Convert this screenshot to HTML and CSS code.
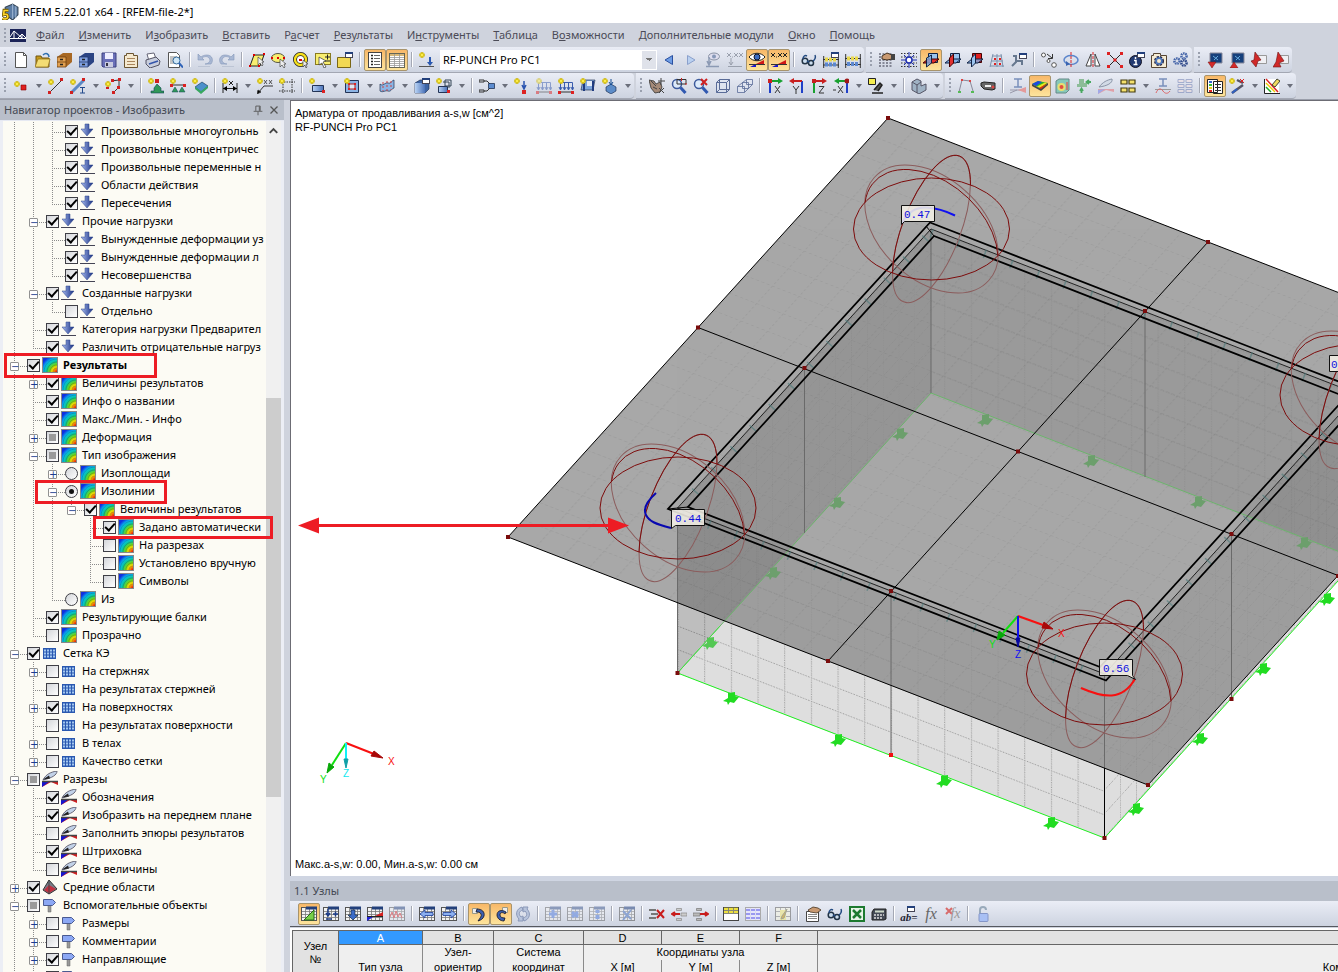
FILE: index.html
```html
<!DOCTYPE html>
<html lang="ru">
<head>
<meta charset="utf-8">
<title>RFEM 5.22.01 x64 - [RFEM-file-2*]</title>
<link rel="stylesheet" href="styles.css">
</head>
<body>
<svg class="defs" aria-hidden="true">
<defs>
<linearGradient id="gBlue" x1="0" x2="1"><stop offset="0" stop-color="#b9d3f5"/><stop offset="1" stop-color="#4a72b8"/></linearGradient>
<linearGradient id="gArrow" x1="0" x2="1"><stop offset="0" stop-color="#a9bdf2"/><stop offset="1" stop-color="#142c80"/></linearGradient>
<radialGradient id="gIso" cx="1" cy="1" r="1.3"><stop offset="0.05" stop-color="#e81010"/><stop offset="0.28" stop-color="#f8d800"/><stop offset="0.42" stop-color="#70d818"/><stop offset="0.58" stop-color="#08c8a0"/><stop offset="0.72" stop-color="#08b8f0"/><stop offset="0.9" stop-color="#1030e0"/></radialGradient>
<g id="st"><path d="M3 0v6M0 3h6M1 1l4 4M5 1l-4 4" stroke="#b8a000" stroke-width="1.6"/><path d="M3 .4v5.2M.4 3h5.2M1.3 1.3l3.4 3.4M4.7 1.3l-3.4 3.4" stroke="#fff04a" stroke-width=".9"/></g>
<g id="win"><rect x=".5" y=".5" width="7" height="5" fill="#fff" stroke="#445"/><path d="M0 1h8" stroke="#23407c" stroke-width="2"/></g>
<g id="tb"><rect x=".5" y="1.500" width="15" height="13" fill="#f4f4f4" stroke="#555"/><path d="M1 5.500h14M1 8.500h14M1 11.500h14M4.500 2v12M8.500 2v12M12.500 2v12" stroke="#777" stroke-width=".8"/><path d="M5 2h11" stroke="#23407c" stroke-width="3"/></g>
<symbol id="arrow" viewBox="0 0 16 16"><path d="M5 1h4v5h4l-6 7-6-7h4z" fill="url(#gArrow)" stroke="#2c4488" stroke-width=".5"/><path d="M0 14.500h15" stroke="#445" stroke-width="1"/></symbol>
<symbol id="iso" viewBox="0 0 16 16"><rect x=".5" y=".5" width="15" height="15" fill="url(#gIso)" stroke="#888"/><path d="M2 15C2 8 7 2 15 2M5 15C5 10 9 5 15 5M8 15c0-4 3-7 7-7M11 15c0-2 1-4 4-4" fill="none" stroke="#123" stroke-opacity=".35" stroke-width=".7"/></symbol>
<symbol id="mesh" viewBox="0 0 16 16"><rect x="1" y="3" width="13" height="11" fill="#2a58b0"/><path d="M2 5.500h11M2 8.500h11M2 11.500h11" stroke="#a4c8f0" stroke-width="2" stroke-dasharray="2 1"/></symbol>
<symbol id="knife" viewBox="0 0 16 16"><path d="M0 10h16v4L9 11 0 16z" fill="#d02020"/><path d="M0 11h7l-7 5z" fill="#1515d0"/><path d="M0 10.500h16" stroke="#444" stroke-width="1.500"/><path d="M1 9C4 3 9 1 15 0c0 4-5 7-14 9z" fill="#c2d2e8" stroke="#667"/><path d="M1 8.500l6-4 1 3z" fill="#222"/></symbol>
<symbol id="pyr" viewBox="0 0 16 16"><path d="M7 1L1 11l6 4 8-5z" fill="#777d88" stroke="#333"/><path d="M7 6l-5 5 5 3 7-4z" fill="#c23040"/><path d="M7 1v14" stroke="#444"/></symbol>
<symbol id="sign" viewBox="0 0 16 16"><path d="M6 3h3v12H6z" fill="#999" stroke="#666" stroke-width=".5"/><path d="M1.500 2.500h9l3 3-3 3h-9z" fill="#8ca8f4" stroke="#4a5a90"/></symbol>
<symbol id="new" viewBox="0 0 16 16"><path d="M2.500.5h8l3 3v12h-11z" fill="#fff" stroke="#555"/><path d="M10.500.5v3h3" fill="none" stroke="#555"/></symbol>
<symbol id="open" viewBox="0 0 16 16"><path d="M1 4h5l1 2h7v9H1z" fill="#c79a1c" stroke="#705510"/><path d="M0 15l3-8h12l-2 8z" fill="#f3dc74" stroke="#8a6a14" stroke-width=".7"/><path d="M8 3c3-3 6-1 6 2" fill="none" stroke="#3070b0" stroke-width="1.500"/></symbol>
<symbol id="cab1" viewBox="0 0 16 16"><path d="M0 5l6-4h9v9l-6 5H0z" fill="#a86824"/><path d="M0 5h9v10H0zM0 10h9" fill="#e2a050" stroke="#6a3c10" stroke-width=".8"/><path d="M3 7.500h3M3 12.500h3" stroke="#222" stroke-width="1.500"/></symbol>
<symbol id="cab2" viewBox="0 0 16 16"><path d="M0 5l6-4h9v9l-6 5H0z" fill="#2b4484"/><path d="M0 5h9v10H0zM0 10h9" fill="#7e9ede" stroke="#22386c" stroke-width=".8"/><path d="M3 7.500h3M3 12.500h3" stroke="#222" stroke-width="1.500"/></symbol>
<symbol id="save" viewBox="0 0 16 16"><path d="M1 1h14v14H2l-1-1z" fill="#6a70b8" stroke="#3c4080"/><path d="M4 1h8v6H4z" fill="#eef"/><path d="M4 10h8v5H4z" fill="#c9cbe0"/><path d="M5 11h2v3H5z" fill="#334"/></symbol>
<symbol id="note" viewBox="0 0 16 16"><path d="M1.500 3.500h2v-2h7v2h4v12h-13z" fill="#f5e9cf" stroke="#6b5430"/><path d="M4 6.500h8M4 9.500h8M4 12.500h8" stroke="#a9855c"/></symbol>
<symbol id="print" viewBox="0 0 16 16"><path d="M2 2l7-1 2 6-7 2z" fill="#fff" stroke="#667"/><path d="M1 8l10-3 4 4-1 4-9 3-4-4z" fill="#c8cedd" stroke="#556"/><path d="M4 12l9-3" stroke="#3355aa" stroke-width="1.500"/></symbol>
<symbol id="prev" viewBox="0 0 16 16"><path d="M1.500.5h8l3 3v12h-11z" fill="#fff" stroke="#555"/><path d="M3 5h7M3 7h4M3 9h4M3 11h4" stroke="#888"/><circle cx="9.500" cy="8.500" r="3.500" fill="#cfe6f6" stroke="#336a9c"/><path d="M12 11l4 4.500" stroke="#2f63b8" stroke-width="2"/></symbol>
<symbol id="undo" viewBox="0 0 16 16"><path d="M1 2v6h6L5 6c4-3 8-1 8 3-1 2-3 3-5 3h6c3-4 1-9-4-9-3 0-5 1-6 2z" fill="#a9b8d4" stroke="#8497b8" stroke-width=".6"/><path d="M1 14.500h12" stroke="#bcc4d4"/></symbol>
<symbol id="redo" viewBox="0 0 16 16"><path d="M15 2v6H9l2-2C7 3 3 5 3 9c1 2 3 3 5 3H2c-3-4-1-9 4-9 3 0 5 1 6 2z" fill="#a9b8d4" stroke="#8497b8" stroke-width=".6"/><path d="M3 14.500h12" stroke="#bcc4d4"/></symbol>
<symbol id="para" viewBox="0 0 16 16"><path d="M1 14L5 3h10l-4 11z" fill="#f8ee70" stroke="#222"/><path d="M0 13h2v2H0zM4 2h2v2H4zM14 1h2v2h-2zM9 13h2v2H9z" fill="#d00"/><path d="M9 5v8l2-2 2 3 1-1-1-3h2z" fill="#eee" stroke="#333" stroke-width=".6"/></symbol>
<symbol id="elli" viewBox="0 0 16 16"><ellipse cx="7" cy="6" rx="6.500" ry="4.500" fill="#f8ee70" stroke="#554"/><path d="M6 5h2v2H6zM0 5h2v2H0zM12 5h2v2h-2z" fill="#d00"/><path d="M9 7v8l2-2 2 3 1-1-1-3h2z" fill="#eee" stroke="#333" stroke-width=".6"/></symbol>
<symbol id="circ" viewBox="0 0 16 16"><circle cx="7.500" cy="7.500" r="5.500" fill="#fff" stroke="#222" stroke-width="4"/><circle cx="7.500" cy="7.500" r="5.500" fill="none" stroke="#f6e01c" stroke-width="2.400"/><path d="M6 7h3v2H6z" fill="#d00"/><path d="M10 8v7l2-2 1 3 1-1-1-3h2z" fill="#eee" stroke="#333" stroke-width=".6"/></symbol>
<symbol id="selp" viewBox="0 0 16 16"><rect x=".5" y="1.500" width="15" height="11" fill="#f8ee70" stroke="#887a20"/><path d="M10 5h5M12.500 2.500v5M10 9h5" stroke="#222"/><path d="M4 5l7 4-3 1 3 5-2 1-2-5-3 2z" fill="#fff" stroke="#333" stroke-width=".7"/></symbol>
<symbol id="newwin" viewBox="0 0 16 16"><path d="M.5 5.500h13v10H.5z" fill="#f2d954" stroke="#7a6615"/><use href="#win" x="8" y="0"/></symbol>
<symbol id="list" viewBox="0 0 16 16"><rect x="1.500" y=".5" width="13" height="15" fill="#fff" stroke="#444"/><path d="M4 3.500h2M4 6.500h2M4 9.500h2M4 12.500h2" stroke="#222" stroke-width="1.500"/><path d="M7 3.500h6M7 6.500h6M7 9.500h6M7 12.500h6" stroke="#666"/></symbol>
<symbol id="tabl" viewBox="0 0 16 16"><rect x=".5" y="1.500" width="15" height="14" fill="#fff" stroke="#665"/><path d="M1 3h14" stroke="#d8b878" stroke-width="2"/><path d="M1 5.500h14M1 7.500h14M1 9.500h14M1 11.500h14M1 13.500h14M5.500 2v13M10.500 2v13" stroke="#999" stroke-width=".8"/></symbol>
<symbol id="starr" viewBox="0 0 16 16"><use href="#st"/><path d="M10 5h2v5h2l-3 4-3-4h2z" fill="#2a58b0"/><path d="M0 14.500h15" stroke="#555"/></symbol>
<symbol id="left" viewBox="0 0 16 16"><path d="M11.500 3.500v9L4 8z" fill="#6d9ce4" stroke="#2a50a0"/></symbol>
<symbol id="right" viewBox="0 0 16 16"><path d="M4.500 3.500v9L12 8z" fill="#b9d0f0" stroke="#8aa0cc"/></symbol>
<symbol id="eyed" viewBox="0 0 16 16"><ellipse cx="9" cy="4.500" rx="5.500" ry="3.500" fill="#dde" stroke="#8a93a5"/><circle cx="9" cy="4.500" r="2" fill="#8798b8"/><path d="M4 5v7M2 9l2 4 2-4M1 14.500h13" stroke="#8c9ab4" stroke-width="1.500" fill="none"/></symbol>
<symbol id="xxd" viewBox="0 0 16 16"><path d="M0 1l4 4M4 1L0 5M5 5h1M7 1l4 4M11 1L7 5M12 1l4 4M16 1l-4 4M4 6v7M2 10l2 3 2-3M1 14.500h14" stroke="#9aa0ad" fill="none"/></symbol>
<symbol id="eye" viewBox="0 0 16 16"><path d="M0 5c4-5 12-5 16 0-4 5-12 5-16 0z" fill="#fff" stroke="#222"/><circle cx="8" cy="5" r="3" fill="#3a6ac0" stroke="#112"/><path d="M1 15l6-3 8-4v4H8z" fill="#d01818"/><path d="M1 15l6-3v3z" fill="#1818d0"/><path d="M0 12.500h16" stroke="#333"/></symbol>
<symbol id="xxx" viewBox="0 0 16 16"><path d="M0 1l4 4M4 1L0 5M5 5h1M7 1l4 4M11 1L7 5M12 1l4 4M16 1l-4 4" stroke="#222" fill="none"/><path d="M1 15l6-3 8-4v4H8z" fill="#d01818"/><path d="M1 15l6-3v3z" fill="#1818d0"/><path d="M0 12.500h16" stroke="#333"/></symbol>
<symbol id="glass" viewBox="0 0 16 16"><circle cx="4" cy="9" r="2.800" fill="#cde" stroke="#234" stroke-width="1.500"/><circle cx="10" cy="11" r="2.500" fill="#cde" stroke="#234" stroke-width="1.500"/><path d="M2 7c0-3 2-4 4-3M12 9c2-1 3-4 2-6M6 9l2 1" stroke="#234a80" fill="none" stroke-width="1.500"/></symbol>
<symbol id="aba" viewBox="0 0 16 16"><path d="M.7 4v12M15.300 4v12M0 13h16M0 7.500h16" stroke="#333"/><path d="M2 7.500h12" stroke="#e8d84c" stroke-width="4" stroke-dasharray="3 1"/><path d="M2 12.500h12" stroke="#5c88d0" stroke-width="4" stroke-dasharray="3 1"/><use href="#win" x="8"/></symbol>
<symbol id="abb" viewBox="0 0 16 16"><path d="M.7 2v14M15.300 2v14M0 12.500h16M0 6.500h16" stroke="#333"/><path d="M2 6.500h12" stroke="#e8d84c" stroke-width="4" stroke-dasharray="3 1"/><path d="M2 12h12" stroke="#5c88d0" stroke-width="4" stroke-dasharray="3 1"/></symbol>
<symbol id="handg" viewBox="0 0 16 16"><path d="M0 2h14M0 5h14M0 8h14M0 11h14M0 14h14" stroke="#334" stroke-dasharray="2 1.500"/><path d="M3 4l5-3 5 2v4l-5 1-5-1z" fill="#c99a72" stroke="#432"/><path d="M12 2h4v6h-4z" fill="#444"/></symbol>
<symbol id="snap" viewBox="0 0 16 16"><path d="M0 1.500h16M0 5h16M0 11h16M0 14.500h16" stroke="#333" stroke-dasharray="1.500 1.500"/><path d="M8 0v16M0 8h16M3 3l10 10M13 3L3 13" stroke="#2030b0"/><circle cx="8" cy="8" r="3" fill="#fff" stroke="#2030b0" stroke-width="1.500"/></symbol>
<symbol id="pl1" viewBox="0 0 16 16"><path d="M5.500 1.500h9v9h-9z" fill="#9cc4ee" stroke="#124"/><path d="M0 11l5-4h11l-5 4z" fill="#e03030" stroke="#400"/><path d="M3.500 6l5-3v8l-5 4z" fill="#7eaee4" fill-opacity=".8" stroke="#124"/></symbol>
<symbol id="pl2" viewBox="0 0 16 16"><path d="M5.500 1.500h9v9h-9z" fill="#9cc4ee" stroke="#124"/><path d="M0 11l5-4h11l-5 4z" fill="#7eaee4" stroke="#124"/><path d="M4.500 6l4-4v9l-4 4z" fill="#e03030" stroke="#400"/></symbol>
<symbol id="pl3" viewBox="0 0 16 16"><path d="M5.500 1.500h9v9h-9z" fill="#e02020" stroke="#400"/><path d="M0 11l5-4h11l-5 4z" fill="#7eaee4" fill-opacity=".8" stroke="#124"/><path d="M4.500 6l4-4v9l-4 4z" fill="#9cc4ee" stroke="#124"/></symbol>
<symbol id="grd" viewBox="0 0 16 16"><path d="M4 2L1 15M8 2v13M12 2l2 13M3 4h10M2 9h12M1 14h14" stroke="#7c92ae" fill="none"/><path d="M5 6h2v2H5zM10 6h2v2h-2zM5 11h2v2H5zM10 11h2v2h-2z" fill="#d22"/></symbol>
<symbol id="wrench" viewBox="0 0 16 16"><path d="M1 14l4-4V4H2M5 9h6v4" stroke="#67788f" stroke-width="2" fill="none"/><use href="#win" x="8" y="1"/></symbol>
<symbol id="move" viewBox="0 0 16 16"><circle cx="2.500" cy="3" r="2" fill="#fff" stroke="#555"/><circle cx="7.500" cy="9" r="1.500" fill="#fff" stroke="#555"/><circle cx="13" cy="13" r="2.300" fill="#fff" stroke="#555"/><path d="M6 2l5 4M11.500 2v4.500H7" stroke="#333" fill="none"/></symbol>
<symbol id="rot" viewBox="0 0 16 16"><ellipse cx="8" cy="8" rx="7" ry="4.500" fill="none" stroke="#5c86cc" stroke-width="1.500"/><path d="M8 0v16" stroke="#d22" stroke-dasharray="3 1"/><path d="M3 9v5l4-2z" fill="#3a64b0"/></symbol>
<symbol id="mirr" viewBox="0 0 16 16"><path d="M6 2v12H1zM10 2v12h5z" fill="#fff" stroke="#444"/><path d="M8 0v16" stroke="#d22" stroke-dasharray="3 1"/></symbol>
<symbol id="cross" viewBox="0 0 16 16"><path d="M1 1l14 14M15 1L1 15" stroke="#222"/><path d="M0 0h3v3H0zM13 0h3v3h-3zM0 13h3v3H0zM13 13h3v3h-3zM6.500 6.500h3v3h-3z" fill="#d22"/></symbol>
<symbol id="info" viewBox="0 0 16 16"><circle cx="6.500" cy="9.500" r="6" fill="#223a72" stroke="#112"/><path d="M6.500 5v2M5 8.500h2v4M4.500 12.500h4" stroke="#fff" stroke-width="1.500" fill="none"/><use href="#win" x="8"/></symbol>
<symbol id="gearn" viewBox="0 0 16 16"><path d="M.5 3.500h2v-2h7v2h6v12H.5z" fill="#f5ecd4" stroke="#543"/><circle cx="8" cy="9" r="3.500" fill="none" stroke="#224" stroke-width="3" stroke-dasharray="2 .8"/><circle cx="8" cy="9" r="3" fill="none" stroke="#4a78c0" stroke-width="1.500"/></symbol>
<symbol id="gears" viewBox="0 0 16 16"><g fill="none" stroke-width="2.500" stroke-dasharray="1.500 .7"><circle cx="4" cy="9" r="2.600" stroke="#4464a8"/><circle cx="11" cy="4" r="2.600" stroke="#4464a8"/><circle cx="11" cy="11" r="2.600" stroke="#2c4688"/></g></symbol>
<symbol id="bd" viewBox="0 0 16 16"><path d="M3 1h12v10H3z" fill="#16407c" stroke="#889"/><path d="M6 4l5 4M11 4L7 8" stroke="#6ad"/><path d="M1 10h8l-4 6z" fill="#d42a2a" stroke="#701010" stroke-width=".5"/></symbol>
<symbol id="bu" viewBox="0 0 16 16"><path d="M3 1h12v10H3z" fill="#16407c" stroke="#889"/><path d="M6 4l5 4M11 4L7 8" stroke="#6ad"/><path d="M1 16h8l-4-6z" fill="#d42a2a" stroke="#701010" stroke-width=".5"/></symbol>
<symbol id="rd" viewBox="0 0 16 16"><path d="M5 3.500h10.500v8H5z" fill="#f0f0f4" stroke="#999"/><path d="M4 0l6 8-3 1-2 6-5-6 3-1z" fill="#d02828" stroke="#701010" stroke-width=".6"/></symbol>
<symbol id="ru" viewBox="0 0 16 16"><path d="M5 3.500h10.500v8H5z" fill="#f0f0f4" stroke="#999"/><path d="M5 0l6 9-5 2 2 4H0l3-5z" fill="#d02828" stroke="#701010" stroke-width=".6"/></symbol>
<symbol id="node" viewBox="0 0 16 16"><use href="#st" x="1" y="3"/><path d="M8 7h5v5H8z" fill="#e02020" stroke="#800" stroke-width=".6"/></symbol>
<symbol id="line" viewBox="0 0 16 16"><path d="M2 14L14 2" stroke="#333"/><path d="M12 0h3v3h-3zM0 13h3v3H0z" fill="#d22020"/><use href="#st" y="1"/></symbol>
<symbol id="memb" viewBox="0 0 16 16"><path d="M2 14L14 2" stroke="#5c88c4" stroke-width="3"/><path d="M12 0h3v3h-3zM0 13h3v3H0z" fill="#d22020"/><use href="#st" y="1"/><path d="M10 9.500h5M10 15h5M12.500 9v6" stroke="#224a8c"/></symbol>
<symbol id="poly" viewBox="0 0 16 16"><path d="M6 3l8-1v7l-5 5" stroke="#333" fill="none"/><path d="M6 1h3v3H6zM13 0h3v3h-3zM12 8h3v3h-3zM7 13h3v3H7zM1 9h3v2H1z" fill="#d22020"/><use href="#st" y="3"/></symbol>
<symbol id="supp" viewBox="0 0 16 16"><path d="M9 6l4 4v3h3v2H3v-2h3v-3z" fill="#309858" stroke="#145" stroke-width=".6"/><path d="M7 1h4v4H7z" fill="#d22020"/><use href="#st"/></symbol>
<symbol id="supl" viewBox="0 0 16 16"><path d="M2 7h13" stroke="#333"/><path d="M0 6h3v3H0zM13 6h3v3h-3z" fill="#d22"/><path d="M5 9l3 5H2zM12 9l3 5H9z" fill="#309858" stroke="#145" stroke-width=".5"/><use href="#st"/></symbol>
<symbol id="sups" viewBox="0 0 16 16"><path d="M3 9l7-5 6 4-7 6z" fill="#4c90cc" stroke="#135" stroke-width=".6"/><path d="M3 11l6 5 7-6v-2l-7 5-6-4z" fill="#38a860"/><use href="#st"/></symbol>
<symbol id="dim" viewBox="0 0 16 16"><path d="M1 5v10M15 5v10M1 10.500h14" stroke="#222"/><path d="M5 8L1 10.500 5 13zM11 8l4 2.500-4 2.500z"/><path d="M7 3l4 4M11 3L7 7" stroke="#222"/><use href="#st"/></symbol>
<symbol id="comm" viewBox="0 0 16 16"><path d="M1 15l6-7h9" stroke="#333" fill="none"/><path d="M0 16l1-4 3 2zM7 2l3 4M10 2L7 6M12 2l3 4M15 2l-3 4" stroke="#333" stroke-width=".8"/><use href="#st"/></symbol>
<symbol id="guid" viewBox="0 0 16 16"><path d="M4 1v15M13 1v15M0 4h16M0 13h16" stroke="#333" stroke-dasharray="1.500 1"/><use href="#st"/></symbol>
<symbol id="surf" viewBox="0 0 16 16"><path d="M3.500 7.500h11v6h-11z" fill="url(#gBlue)" stroke="#235"/><path d="M13 12h3v3h-3z" fill="#d22"/><use href="#st"/></symbol>
<symbol id="hole" viewBox="0 0 16 16"><path d="M1.500 2.500h13v12h-13z" fill="#8cb4e4" stroke="#235"/><path d="M5 6h6v5H5z" fill="#dde8f4" stroke="#a22"/><path d="M4 5h2v2H4zM10 5h2v2h-2zM4 10h2v2H4zM10 10h2v2h-2z" fill="#d22"/><use href="#st"/></symbol>
<symbol id="shell" viewBox="0 0 16 16"><path d="M1 6c3 3 5-2 8-1s3-2 6-3v8c-3 1-3 4-6 3s-5 2-8 0z" fill="#8cb4e4" stroke="#235" stroke-width=".7"/><path d="M8 3v11M4 4v9M12 3v9" stroke="#c44" stroke-dasharray="2 2"/></symbol>
<symbol id="solid" viewBox="0 0 16 16"><path d="M1 5l5-3h9v9l-4 4H1z" fill="#3c64a4" stroke="#124" stroke-width=".6"/><path d="M1 5h10v10H1z" fill="url(#gBlue)"/><use href="#win" x="8"/></symbol>
<symbol id="solid2" viewBox="0 0 16 16"><path d="M2.500 8.500h9v6h-9z" fill="url(#gBlue)" stroke="#235"/><path d="M9 2h6v6H9zM7 4h6v6" fill="none" stroke="#345"/><path d="M11 12h3v3h-3z" fill="#d22"/><use href="#st"/></symbol>
<symbol id="conn" viewBox="0 0 16 16"><path d="M0 2h5v2H0zM0 12h5v2H0zM5 3h3l3 3M5 13h3l3-3" fill="none" stroke="#333"/><path d="M9.500 5.500h6v5h-6z" fill="#5c8cd0" stroke="#124" stroke-width=".7"/></symbol>
<symbol id="load" viewBox="0 0 16 16"><path d="M10 3v7M8 7l2 4 2-4" stroke="#2a54b0" stroke-width="1.500" fill="none"/><path d="M8 12h4v4H8z" fill="#d22"/><use href="#st"/></symbol>
<symbol id="lodl" viewBox="0 0 16 16"><path d="M2 4.500h12.500V12M2.500 4v8M6.500 4v8M10.500 4v8M1 9l1.500 3L4 9M5 9l1.500 3L8 9M9 9l1.500 3L12 9M13 9l1.500 3L16 9" stroke="#3a5cae" fill="none"/><path d="M1 14h14" stroke="#333"/><path d="M0 13h3v3H0zM13 13h3v3h-3z" fill="#d22"/><use href="#st"/></symbol>
<symbol id="lods" viewBox="0 0 16 16"><path d="M3 2h12l-2 10H1z" fill="#7ea6dc" stroke="#124" stroke-width=".6"/><path d="M4 3v10M13 3v10" stroke="#203c80" stroke-width="2"/><path d="M7 3h5v5H7z" fill="#e4ecf8"/><use href="#st"/></symbol>
<symbol id="lodc" viewBox="0 0 16 16"><path d="M4 9l5-3 5 3v4l-5 3-5-3z" fill="#5c8cc8" stroke="#124" stroke-width=".6"/><path d="M9 1v5M7 4l2 3 2-3" stroke="#124a90" fill="none"/><use href="#st"/></symbol>
<symbol id="pan" viewBox="0 0 16 16"><path d="M0 2l5 1 2 3 4-2 2 5-2 5-5 1-4-5z" fill="#a48a78" stroke="#333" stroke-width=".8"/><path d="M2 3l5 5M4 9l4 2M12 0v7M9 3h7M10 10l5 5M15 10l-5 5" stroke="#444"/></symbol>
<symbol id="zoom" viewBox="0 0 16 16"><circle cx="6" cy="6" r="4.500" fill="#dceafa" stroke="#3c5a9c" stroke-width="1.500"/><path d="M9.500 9.500l5 5.500" stroke="#3058b0" stroke-width="3"/><path d="M6 6h9V1.500H6z" fill="none" stroke="#333"/><path d="M10.500 0v3M14 6h2" stroke="#c22" /></symbol>
<symbol id="zoomx" viewBox="0 0 16 16"><circle cx="6" cy="6" r="4.500" fill="#dceafa" stroke="#3c5a9c" stroke-width="1.500"/><path d="M9.500 9.500l5 5.500" stroke="#3058b0" stroke-width="3"/><path d="M8 1l6 6M14 1L8 7" stroke="#d02020" stroke-width="2"/></symbol>
<symbol id="cube" viewBox="0 0 16 16"><path d="M1.500 4.500h10v10h-10zM4.500 1.500h10v10h-10zM1.500 4.500l3-3M11.500 4.500l3-3M11.500 14.500l3-3M1.500 14.500l3-3" fill="#dde5f4" fill-opacity=".5" stroke="#5a6c98"/></symbol>
<symbol id="cubes" viewBox="0 0 16 16"><path d="M9.500 1.500h6v5h-6zM5.500 4.500h6v6h-6zM.5 8.500h7v6h-7zM.5 8.500l9-7M7.500 14.500l8-8" fill="#dfe5f2" fill-opacity=".7" stroke="#5a6c98" stroke-width=".8"/></symbol>
<symbol id="vx" viewBox="0 0 16 16"><path d="M3 15V3" stroke="#2040c8" stroke-width="2"/><path d="M3 3h10" stroke="#18a030" stroke-width="2"/><path d="M11 0l5 3-5 3z" fill="#18a030"/><path d="M1 1h4v4H1z" fill="#c22"/><path d="M8 8l5 7M13 8l-5 7" stroke="#333"/></symbol>
<symbol id="vy" viewBox="0 0 16 16"><path d="M13 15V3" stroke="#2040c8" stroke-width="2"/><path d="M13 3H3" stroke="#c82020" stroke-width="2"/><path d="M5 0L0 3l5 3z" fill="#c82020"/><path d="M4 8l3 4 3-4M7 12v4" stroke="#333" fill="none"/></symbol>
<symbol id="vz" viewBox="0 0 16 16"><path d="M3 15V3" stroke="#18a030" stroke-width="2"/><path d="M3 3h10" stroke="#c82020" stroke-width="2"/><path d="M11 0l5 3-5 3zM1 1h4v4H1z" fill="#c82020"/><path d="M8 8.500h5l-5 6.500h5" stroke="#333" fill="none"/></symbol>
<symbol id="vmx" viewBox="0 0 16 16"><path d="M14 15V3" stroke="#2040c8" stroke-width="2"/><path d="M14 3H4" stroke="#18a030" stroke-width="2"/><circle cx="14" cy="3" r="2.500" fill="#a01818"/><path d="M6 0L1 3l5 3z" fill="#18a030"/><path d="M0 12h3M5 8l5 7M10 8l-5 7" stroke="#333"/></symbol>
<symbol id="scope" viewBox="0 0 16 16"><path d="M.5.5h7v6h-7z" fill="#f6ee50" stroke="#222"/><path d="M4 15h11M6 12l6-7 2 2-4 6" fill="#555" stroke="#222" stroke-width="1.500"/></symbol>
<symbol id="lego" viewBox="0 0 16 16"><path d="M1 4l5-3 4 2v5l5-2v6l-7 4-7-4z" fill="#9fb2c4" stroke="#556"/><path d="M1 4l5 3v8M6 7l4-3" stroke="#556" fill="none"/></symbol>
<symbol id="frame" viewBox="0 0 16 16"><path d="M1 14L4 2l8 1 3 10" fill="none" stroke="#889"/><path d="M3 1h2v2H3zM11 2h2v2h-2z" fill="#d44"/><path d="M0 13h3v2H0zM13 13h3v2h-3z" fill="#5b5"/></symbol>
<symbol id="proj" viewBox="0 0 16 16"><path d="M1 5l3-1 11 1v6l-3 1-8-1-3-3z" fill="#666" stroke="#222"/><path d="M5 7h6v2H5z" fill="#eee"/><circle cx="13" cy="9" r="1.500" fill="#d44"/></symbol>
<symbol id="ibeam" viewBox="0 0 16 16"><path d="M4 1h8M4 9h8M8 1v8" stroke="#7a90bc" stroke-width="1.500"/><path d="M0 12h16M0 15l7-3" stroke="#99a"/><path d="M8 12l8-3v6z" fill="#e49a9a"/></symbol>
<symbol id="plate" viewBox="0 0 16 16"><path d="M0 6l6-3 10 2-7 6z" fill="#28b828"/><path d="M0 6l6-3 4 1-6 4z" fill="#1c48e0"/><path d="M5 8.500l8-4 2 .5-7 5z" fill="#f0e020"/><path d="M7 10l9-5-7 7z" fill="#e83010"/><path d="M0 6l9 5 7-6v2l-7 6-9-5z" fill="#444"/></symbol>
<symbol id="isoc" viewBox="0 0 16 16"><path d="M2 3l3-2h10v11l-3 3H2z" fill="#86c8b8" stroke="#688"/><circle cx="7.500" cy="9" r="4" fill="#e8e070"/><circle cx="7.500" cy="9" r="2" fill="#e05040"/><path d="M13 4v8" stroke="#c66" stroke-width="1.500"/></symbol>
<symbol id="gsup" viewBox="0 0 16 16"><path d="M3 1h5v4h3v4H1V6h2z" fill="#8cbc98"/><path d="M5.500 15v-4M4 13l1.500-2.500L7 13M15 4h-4M13 2l-2.500 2L13 6" fill="none" stroke="#48a860" stroke-width="1.800"/></symbol>
<symbol id="knd" viewBox="0 0 16 16"><path d="M0 11h16v3L8 12l-8 4z" fill="#e0a0a8"/><path d="M0 12l7-1-7 5z" fill="#a0a8e8"/><path d="M1 9c4-5 8-7 13-8 1 4-5 7-13 8z" fill="#d2dae6" stroke="#8a94a6"/></symbol>
<symbol id="four" viewBox="0 0 16 16"><path d="M1 2h6v4H1zM9 2h6v4H9zM1 10h6v4H1zM9 10h6v4H9z" fill="#f4e06c" stroke="#443c10" stroke-width="1.200"/></symbol>
<symbol id="iwave" viewBox="0 0 16 16"><path d="M4 1h8M4 8h8M8 1v7" stroke="#7a90bc" stroke-width="1.500"/><path d="M0 11.500h16" stroke="#999"/><path d="M1 15c2-5 5-5 7-2s5 3 7 0" stroke="#d66" fill="none"/></symbol>
<symbol id="bars" viewBox="0 0 16 16"><path d="M1 1.500h6v3H1zM9 1.500h6v3H9zM1 6.500h6v3H1zM9 6.500h6v3H9zM1 11.500h6v3H1zM9 11.500h6v3H9z" fill="#f2dede" stroke="#6a7ab0"/></symbol>
<symbol id="panel" viewBox="0 0 16 16"><path d="M.5 1.500h10v13H.5zM6.500 3.500h9v12h-9z" fill="#fff" stroke="#222"/><path d="M2 4h3" stroke="#36c" stroke-width="2"/><path d="M2 7h3" stroke="#3b3" stroke-width="2"/><path d="M2 10h3" stroke="#ec2" stroke-width="2"/><path d="M2 13h3" stroke="#d22" stroke-width="2"/><path d="M8 6.500h6M8 9.500h6M8 12.500h6" stroke="#333"/></symbol>
<symbol id="pick" viewBox="0 0 16 16"><path d="M3 15L14 7M8 2l6 3" stroke="#556" stroke-width="2.500"/><path d="M3 15l5-4" stroke="#3060c0" stroke-width="2"/><path d="M11 1l4 4M15 1l-4 4" stroke="#d22"/><use href="#st"/></symbol>
<symbol id="chart" viewBox="0 0 16 16"><path d="M1 1h14v14H1z" fill="#fff"/><path d="M.5 1v14.500H16" stroke="#222" fill="none"/><path d="M2 1l12 13" stroke="#d22" stroke-width="1.500"/><path d="M2 5l9 9" stroke="#ec0" stroke-width="1.500"/><path d="M2 9l5 5" stroke="#2a2" stroke-width="1.500"/><path d="M8 7l5-6 3 2-5 6z" fill="#f0dc60" stroke="#443"/></symbol>
<symbol id="t1" viewBox="0 0 16 16"><use href="#tb"/><path d="M13 4v10H3z" fill="#78d048" stroke="#276c14"/></symbol>
<symbol id="t2" viewBox="0 0 16 16"><use href="#tb"/><path d="M5 3v6M3 7l2 3 2-3M10 8h5M12.500 5.500v5M3 13h6" stroke="#1c3c88" stroke-width="1.500" fill="none"/></symbol>
<symbol id="t3" viewBox="0 0 16 16"><use href="#tb"/><path d="M6 4h4v5h3l-5 5-5-5h3z" fill="#3c6cc8" stroke="#123" stroke-width=".6"/></symbol>
<symbol id="t4" viewBox="0 0 16 16"><use href="#tb"/><path d="M6 11l10-5v5z" fill="#d42020"/><path d="M0 15l6-4H0z" fill="#2020d0"/><path d="M0 10.500h16" stroke="#222"/></symbol>
<symbol id="t5" viewBox="0 0 16 16"><g opacity=".5"><use href="#tb"/><path d="M1 11l2-5 2 6 2-7 2 6 2-4 2 5" stroke="#e02020" fill="none"/></g></symbol>
<symbol id="tl" viewBox="0 0 16 16"><use href="#tb"/><path d="M6 4v2.500h8v3H6V12L1 8z" fill="#8cb0f0" stroke="#1c3c98" stroke-width=".8"/></symbol>
<symbol id="tr" viewBox="0 0 16 16"><use href="#tb"/><path d="M10 4v2.500H2v3h8V12l5-4z" fill="#8cb0f0" stroke="#1c3c98" stroke-width=".8"/></symbol>
<symbol id="c1" viewBox="0 0 16 16"><path d="M1.500 2.500h5v5h-5z" fill="#eee" stroke="#998"/><path d="M6 3c5 0 8 3 7 7-1 3-3 4-6 5 2-3 4-5 3-7-1-2-3-2-5-2z" fill="#3c60b0" stroke="#112" stroke-width=".8"/></symbol>
<symbol id="c2" viewBox="0 0 16 16"><path d="M9.500 1.500h5v5h-5z" fill="#eee" stroke="#998"/><path d="M13 6C8 3 4 5 4 9c0 3 3 6 7 6l1-3c-3 0-5-1-5-3 0-3 3-3 5-1z" fill="#3c60b0" stroke="#112" stroke-width=".8"/></symbol>
<symbol id="c3" viewBox="0 0 16 16"><path d="M7 1C1 3 0 9 4 13l-1 2h5v-5l-2 1C3 8 4 5 8 4zM9 15c6-2 7-8 3-12l1-2H8v5l2-1c3 3 2 6-2 7z" fill="#b8c4dc" stroke="#8a98b8"/></symbol>
<symbol id="g1" viewBox="0 0 16 16"><g opacity=".45"><use href="#tb"/><path d="M8 4v8M4 8h8" stroke="#3c6cd8" stroke-width="3"/></g></symbol>
<symbol id="g2" viewBox="0 0 16 16"><g opacity=".45"><use href="#tb"/><path d="M5 6l6 5M11 6l-6 5" stroke="#3c6cd8" stroke-width="3"/></g></symbol>
<symbol id="g3" viewBox="0 0 16 16"><g opacity=".45"><use href="#tb"/><path d="M6.500 4h4v3h-4zM6.500 9h4v4h-4z" fill="#3c6cd8"/></g></symbol>
<symbol id="g4" viewBox="0 0 16 16"><g opacity=".55"><use href="#tb"/><path d="M4 5l8 8M12 4l-8 10" stroke="#4c74c0" stroke-width="2"/></g></symbol>
<symbol id="r1" viewBox="0 0 16 16"><path d="M0 3h7v2H0zM2 7h7v2H2zM0 11h7v2H0z" fill="#777"/><path d="M8 4l7 8M15 4l-7 8" stroke="#c81c1c" stroke-width="2"/></symbol>
<symbol id="r2" viewBox="0 0 16 16"><path d="M5.500 2.500h5v2h-5zM10 7h6v3h-6zM5.500 12.500h5v2h-5z" fill="#ccc" stroke="#888" stroke-width=".7"/><path d="M9 8H2M4 6L1 8l3 2" stroke="#c81c1c" stroke-width="2" fill="none"/></symbol>
<symbol id="r3" viewBox="0 0 16 16"><path d="M3.500 2.500h5v2h-5zM0 7h7v3H0zM3.500 12.500h5v2h-5z" fill="#bbb" stroke="#777" stroke-width=".7"/><path d="M7 8h7M12 6l3 2-3 2" stroke="#c81c1c" stroke-width="2" fill="none"/></symbol>
<symbol id="ty" viewBox="0 0 16 16"><rect x=".5" y="1.500" width="15" height="13" fill="#fff" stroke="#444"/><path d="M1 3h14M1 6h14" stroke="#ece040" stroke-width="2.500"/><path d="M1 4.500h14M1 7.500h14M5.500 2v6M10.500 2v6" stroke="#887"/></symbol>
<symbol id="tv" viewBox="0 0 16 16"><rect x=".5" y="1.500" width="15" height="13" fill="#fff" stroke="#aaa"/><path d="M1 4h14M1 8h14M1 12h14" stroke="#9a98f0" stroke-width="2.500"/><path d="M5.500 2v12M10.500 2v12" stroke="#dde"/></symbol>
<symbol id="tp" viewBox="0 0 16 16"><g opacity=".65"><rect x=".5" y="1.500" width="15" height="13" fill="#f4f4e4" stroke="#777"/><path d="M1 5.500h14M1 10.500h14M5.500 2v12M10.500 2v12" stroke="#999"/><path d="M5 4h6v10H5z" fill="#f0e888"/><path d="M12 3L9 12l-3 1 1-3z" fill="#d0a020" stroke="#886"/></g></symbol>
<symbol id="prop" viewBox="0 0 16 16"><path d="M1.500 5.500h12v10h-12z" fill="#fff" stroke="#444"/><path d="M3 8.500h9M3 10.500h9M3 12.500h9" stroke="#888"/><path d="M3 4l5-3 5 1 3 2-4 3-7-1z" fill="#c99a72" stroke="#432" stroke-width=".8"/></symbol>
<symbol id="xl" viewBox="0 0 16 16"><rect x="1" y="1" width="14" height="14" fill="#e8f4e8" stroke="#1d7a30" stroke-width="2"/><path d="M4 4l8 8M12 4l-8 8" stroke="#1d7a30" stroke-width="2.500"/></symbol>
<symbol id="calc" viewBox="0 0 16 16"><path d="M3 3h12v10l-2 1H1V6z" fill="#444a55" stroke="#222"/><path d="M4 5.500h9" stroke="#cdd8c8" stroke-width="2"/><path d="M3 9h10M3 12h9" stroke="#ddd" stroke-width="1.500" stroke-dasharray="2 1"/></symbol>
<symbol id="unl" viewBox="0 0 16 16"><path d="M5 8V4c0-4 6-4 6 0" fill="none" stroke="#9ab" stroke-width="2"/><rect x="4" y="7.500" width="9" height="8" rx="1" fill="#a9c0f4" stroke="#8496c8"/></symbol>
<symbol id="support" viewBox="-8 -7 16 14"><path d="M-3-6l7-1v4l4 1-5 6-4-1-2 3-1-3-4-1 5-3z" fill="currentColor"/></symbol>
<g id="sphere" fill="none"><ellipse rx="77" ry="51" transform="rotate(42)" stroke="#8b5c5c"/><ellipse rx="78" ry="29" transform="rotate(-69)" stroke="#8b5c5c"/><ellipse rx="78" ry="51" stroke="#7d0c0c"/><path d="M-66.400-26.600A77 51 42 0 1 66.400 26.600M-39 44A78 29 -69 0 1 39-44" stroke="#7d0c0c"/></g>
<pattern id="pSlab" width="1" height="1" patternUnits="userSpaceOnUse" patternTransform="matrix(26.670 10.330 -15.830 17.460 888 118)"><path d="M0 0h1M0 0v1" stroke="#000" stroke-width=".09" stroke-opacity=".12" stroke-dasharray=".12 .08"/></pattern>
<pattern id="pFront" width="1" height="1" patternUnits="userSpaceOnUse" patternTransform="matrix(26.670 10.330 0 23.500 677.500 508)"><path d="M0 0h1M0 0v1" stroke="#000" stroke-width=".08" stroke-opacity=".6" stroke-dasharray=".05 .05"/></pattern>
<pattern id="pSide" width="1" height="1" patternUnits="userSpaceOnUse" patternTransform="matrix(-15.830 17.460 0 23.500 931 229)"><path d="M0 0h1M0 0v1" stroke="#000" stroke-width=".08" stroke-opacity=".6" stroke-dasharray=".05 .05"/></pattern>
<clipPath id="cSlab"><path d="M888 118L1528 366 1148 785 508 537z"/></clipPath>
<clipPath id="cMax"><path d="M292 850h187.500v27H292z"/></clipPath>
</defs>
</svg>

<header class="title">
<svg class="logo" viewBox="0 0 16 16"><path d="M3 4l7-3 5 3v7l-5 5-7-5z" fill="#5c7ca4" stroke="#345"/><path d="M10 1v14M13 3v11" stroke="#9cb4d0"/><path d="M6 7H2l-.5 4c3-1 4 0 4 2s-3 2.500-5 1.500" fill="none" stroke="#6a5400" stroke-width="3"/><path d="M6 7H2l-.5 4c3-1 4 0 4 2s-3 2.500-5 1.500" fill="none" stroke="#ffd428" stroke-width="1.500"/></svg>
<h1>RFEM 5.22.01 x64 - [RFEM-file-2*]</h1>
</header>

<nav class="menu" aria-label="Главное меню">
<span class="grip"></span>
<svg class="brand" viewBox="0 0 16 13"><path d="M0 0h16v13H0z" fill="#1c2458"/><path d="M0 9.500h16M4 2.500v7M12 5v5M0 8l4-6 8 7M8 9l4-4 4 4" stroke="#fff" fill="none"/></svg>
<a href="#"><u>Ф</u>айл</a><a href="#"><u>И</u>зменить</a><a href="#">И<u>з</u>образить</a><a href="#"><u>В</u>ставить</a><a href="#">Р<u>а</u>счет</a><a href="#"><u>Р</u>езультаты</a><a href="#">И<u>н</u>струменты</a><a href="#"><u>Т</u>аблица</a><a href="#">В<u>о</u>зможности</a><a href="#"><u>Д</u>ополнительные модули</a><a href="#"><u>О</u>кно</a><a href="#"><u>П</u>омощь</a>
</nav>

<div class="bars">
<div class="group"><span class="grip"></span>
<button aria-label="Создать"><svg><use href="#new"/></svg></button><button aria-label="Открыть"><svg><use href="#open"/></svg></button><button aria-label="Менеджер проектов"><svg><use href="#cab1"/></svg></button><button aria-label="Менеджер блоков"><svg><use href="#cab2"/></svg></button><button aria-label="Сохранить"><svg><use href="#save"/></svg></button><button aria-label="Протокол"><svg><use href="#note"/></svg></button><button aria-label="Печать"><svg><use href="#print"/></svg></button><button aria-label="Просмотр"><svg><use href="#prev"/></svg></button><span class="sep"></span>
<button aria-label="Отменить"><svg><use href="#undo"/></svg></button><button aria-label="Повторить"><svg><use href="#redo"/></svg></button><span class="sep"></span>
<button aria-label="Выбор ромбом"><svg><use href="#para"/></svg></button><button aria-label="Выбор эллипсом"><svg><use href="#elli"/></svg></button><button aria-label="Выбор кольцом"><svg><use href="#circ"/></svg></button><button aria-label="Добавить к выбору"><svg><use href="#selp"/></svg></button><button aria-label="Новое окно"><svg><use href="#newwin"/></svg></button><span class="sep"></span>
<button class="on" aria-label="Навигатор"><svg><use href="#list"/></svg></button><button class="on" aria-label="Таблицы"><svg><use href="#tabl"/></svg></button><span class="sep"></span>
<button aria-label="Новое загружение"><svg><use href="#starr"/></svg></button>
<select class="case" aria-label="Загружение"><option>RF-PUNCH Pro PC1</option></select>
<button aria-label="Назад"><svg><use href="#left"/></svg></button><button aria-label="Вперед"><svg><use href="#right"/></svg></button><button aria-label="Показать нагрузки"><svg><use href="#eyed"/></svg></button><button aria-label="Величины нагрузок"><svg><use href="#xxd"/></svg></button><button class="on" aria-label="Показать результаты"><svg><use href="#eye"/></svg></button><button class="on" aria-label="Величины"><svg><use href="#xxx"/></svg></button><span class="sep"></span>
<button aria-label="Фильтр"><svg><use href="#glass"/></svg></button><button aria-label="Расчет выбранного"><svg><use href="#aba"/></svg></button><button aria-label="Рассчитать все"><svg><use href="#abb"/></svg></button></div>
<div class="group"><span class="grip"></span>
<button aria-label="Рабочая сетка"><svg><use href="#handg"/></svg></button><button aria-label="Привязка"><svg><use href="#snap"/></svg></button><button class="on" aria-label="Плоскость XY"><svg><use href="#pl1"/></svg></button><button aria-label="Плоскость YZ"><svg><use href="#pl2"/></svg></button><button aria-label="Плоскость XZ"><svg><use href="#pl3"/></svg></button><button aria-label="Сетка"><svg><use href="#grd"/></svg></button><button aria-label="Настройка"><svg><use href="#wrench"/></svg></button><span class="sep"></span>
<button aria-label="Переместить"><svg><use href="#move"/></svg></button><button aria-label="Повернуть"><svg><use href="#rot"/></svg></button><button aria-label="Отразить"><svg><use href="#mirr"/></svg></button><button aria-label="Соединить"><svg><use href="#cross"/></svg></button><button aria-label="Информация"><svg><use href="#info"/></svg></button><button aria-label="Параметры"><svg><use href="#gearn"/></svg></button><button aria-label="Опции"><svg><use href="#gears"/></svg></button></div>
<div class="group"><span class="grip"></span>
<button aria-label="Загрузить блок"><svg><use href="#bd"/></svg></button><button aria-label="Выгрузить блок"><svg><use href="#bu"/></svg></button><button aria-label="Импорт"><svg><use href="#rd"/></svg></button><button aria-label="Экспорт"><svg><use href="#ru"/></svg></button></div>
</div>

<div class="bars">
<div class="group"><span class="grip"></span>
<button aria-label="Узел"><svg><use href="#node"/></svg></button><button class="dd" aria-label="Виды узлов"></button><button aria-label="Линия"><svg><use href="#line"/></svg></button><button aria-label="Стержень"><svg><use href="#memb"/></svg></button><button class="dd" aria-label="Виды стержней"></button><button aria-label="Полилиния"><svg><use href="#poly"/></svg></button><button class="dd" aria-label="Виды линий"></button><span class="sep"></span>
<button aria-label="Узловая опора"><svg><use href="#supp"/></svg></button><button aria-label="Линейная опора"><svg><use href="#supl"/></svg></button><button aria-label="Опора поверхности"><svg><use href="#sups"/></svg></button><span class="sep"></span>
<button aria-label="Размер"><svg><use href="#dim"/></svg></button><button class="dd" aria-label="Виды размеров"></button><button aria-label="Комментарий"><svg><use href="#comm"/></svg></button><button aria-label="Направляющая"><svg><use href="#guid"/></svg></button><span class="sep"></span>
<button aria-label="Поверхность"><svg><use href="#surf"/></svg></button><button class="dd" aria-label="Виды поверхностей"></button><button aria-label="Отверстие"><svg><use href="#hole"/></svg></button><button class="dd" aria-label="Виды отверстий"></button><button aria-label="Оболочка"><svg><use href="#shell"/></svg></button><button class="dd" aria-label="Виды оболочек"></button><button aria-label="Тело"><svg><use href="#solid"/></svg></button><button aria-label="Новое тело"><svg><use href="#solid2"/></svg></button><button class="dd" aria-label="Виды тел"></button><span class="sep"></span>
<button aria-label="Соединение"><svg><use href="#conn"/></svg></button><button class="dd" aria-label="Виды соединений"></button><button aria-label="Узловая нагрузка"><svg><use href="#load"/></svg></button><button aria-label="Нагрузка на стержень"><svg class="dim"><use href="#lodl"/></svg></button><button aria-label="Линейная нагрузка"><svg><use href="#lodl"/></svg></button><button aria-label="Нагрузка на поверхность"><svg><use href="#lods"/></svg></button><button aria-label="Нагрузка на тело"><svg><use href="#lodc"/></svg></button><button class="dd" aria-label="Виды нагрузок"></button></div>
<div class="group"><span class="grip"></span>
<button aria-label="Сдвиг"><svg><use href="#pan"/></svg></button><button aria-label="Масштаб"><svg><use href="#zoom"/></svg></button><button aria-label="Показать все"><svg><use href="#zoomx"/></svg></button><button aria-label="Изометрия"><svg><use href="#cube"/></svg></button><button aria-label="Перспектива"><svg><use href="#cubes"/></svg></button><span class="sep"></span>
<button aria-label="Вид X"><svg><use href="#vx"/></svg></button><button aria-label="Вид Y"><svg><use href="#vy"/></svg></button><button aria-label="Вид Z"><svg><use href="#vz"/></svg></button><button aria-label="Вид -X"><svg><use href="#vmx"/></svg></button><button class="dd" aria-label="Другие виды"></button><button aria-label="Видимость"><svg><use href="#scope"/></svg></button><button class="dd" aria-label="Виды видимости"></button><span class="sep"></span>
<button aria-label="Отображение"><svg><use href="#lego"/></svg></button><button class="dd" aria-label="Режимы"></button></div>
<div class="group"><span class="grip"></span>
<button aria-label="Деформации"><svg><use href="#frame"/></svg></button><button aria-label="Анимация"><svg><use href="#proj"/></svg></button><span class="sep"></span>
<button aria-label="Усилия стержней"><svg><use href="#ibeam"/></svg></button><button class="on" aria-label="Результаты поверхностей"><svg><use href="#plate"/></svg></button><button aria-label="Результаты тел"><svg><use href="#isoc"/></svg></button><button aria-label="Реакции"><svg><use href="#gsup"/></svg></button><button aria-label="Разрез"><svg><use href="#knd"/></svg></button><button aria-label="Окна"><svg><use href="#four"/></svg></button><button class="dd" aria-label="Расположение окон"></button><button aria-label="Эпюры"><svg><use href="#iwave"/></svg></button><button aria-label="Сравнение"><svg class="dim"><use href="#bars"/></svg></button><span class="sep"></span>
<button class="on" aria-label="Панель"><svg><use href="#panel"/></svg></button><button aria-label="Инструмент"><svg><use href="#pick"/></svg></button><button class="dd" aria-label="Виды инструментов"></button><button aria-label="Цвета"><svg><use href="#chart"/></svg></button><button class="dd" aria-label="Шкалы"></button></div>
</div>

<main>
<aside>
<div class="dockhead"><h2>Навигатор проектов - Изобразить</h2><button aria-label="Закрепить"><svg viewBox="0 0 16 16"><path d="M5.500 9V3.500h5V9M3 9.500h10M8 10v4M9.500 4v5" stroke="#555" fill="none"/></svg></button><button aria-label="Закрыть"><svg viewBox="0 0 16 16"><path d="M4 4l8 8M12 4l-8 8" stroke="#555" stroke-width="1.500"/></svg></button></div>
<div class="treebox">
<ul class="tree">
<li><ul><li><ul>
<li><div class="row"><label><input type="checkbox" checked><svg><use href="#arrow"/></svg>Произвольные многоугольнь</label></div></li>
<li><div class="row"><label><input type="checkbox" checked><svg><use href="#arrow"/></svg>Произвольные концентричес</label></div></li>
<li><div class="row"><label><input type="checkbox" checked><svg><use href="#arrow"/></svg>Произвольные переменные н</label></div></li>
<li><div class="row"><label><input type="checkbox" checked><svg><use href="#arrow"/></svg>Области действия</label></div></li>
<li><div class="row"><label><input type="checkbox" checked><svg><use href="#arrow"/></svg>Пересечения</label></div></li>
</ul></li>
<li><div class="row"><button aria-label="Свернуть">−</button><label><input type="checkbox" checked><svg><use href="#arrow"/></svg>Прочие нагрузки</label></div><ul>
<li><div class="row"><label><input type="checkbox" checked><svg><use href="#arrow"/></svg>Вынужденные деформации уз</label></div></li>
<li><div class="row"><label><input type="checkbox" checked><svg><use href="#arrow"/></svg>Вынужденные деформации л</label></div></li>
<li><div class="row"><label><input type="checkbox" checked><svg><use href="#arrow"/></svg>Несовершенства</label></div></li>
</ul></li>
<li><div class="row"><button aria-label="Свернуть">−</button><label><input type="checkbox" checked><svg><use href="#arrow"/></svg>Созданные нагрузки</label></div><ul>
<li><div class="row"><label><input type="checkbox"><svg><use href="#arrow"/></svg>Отдельно</label></div></li>
</ul></li>
<li><div class="row"><label><input type="checkbox" checked><svg><use href="#arrow"/></svg>Категория нагрузки Предварител</label></div></li>
<li><div class="row"><label><input type="checkbox" checked><svg><use href="#arrow"/></svg>Различить отрицательные нагруз</label></div></li>
</ul></li>
<li><div class="row"><button aria-label="Свернуть">−</button><label class="bold"><input type="checkbox" checked><svg><use href="#iso"/></svg>Результаты</label></div><ul>
<li><div class="row"><button aria-label="Развернуть">+</button><label><input type="checkbox" checked><svg><use href="#iso"/></svg>Величины результатов</label></div></li>
<li><div class="row"><label><input type="checkbox" checked><svg><use href="#iso"/></svg>Инфо о названии</label></div></li>
<li><div class="row"><label><input type="checkbox" checked><svg><use href="#iso"/></svg>Макс./Мин. - Инфо</label></div></li>
<li><div class="row"><button aria-label="Развернуть">+</button><label><input type="checkbox" class="mixed"><svg><use href="#iso"/></svg>Деформация</label></div></li>
<li><div class="row"><button aria-label="Свернуть">−</button><label><input type="checkbox" class="mixed"><svg><use href="#iso"/></svg>Тип изображения</label></div><ul>
<li><div class="row"><button aria-label="Развернуть">+</button><label><input type="radio" name="kind"><svg><use href="#iso"/></svg>Изоплощади</label></div></li>
<li><div class="row"><button aria-label="Свернуть">−</button><label><input type="radio" name="kind" checked><svg><use href="#iso"/></svg>Изолинии</label></div><ul>
<li><div class="row"><button aria-label="Свернуть">−</button><label><input type="checkbox" checked><svg><use href="#iso"/></svg>Величины результатов</label></div><ul>
<li><div class="row"><label><input type="checkbox" checked><svg><use href="#iso"/></svg>Задано автоматически</label></div></li>
<li><div class="row"><label><input type="checkbox"><svg><use href="#iso"/></svg>На разрезах</label></div></li>
<li><div class="row"><label><input type="checkbox"><svg><use href="#iso"/></svg>Установлено вручную</label></div></li>
<li><div class="row"><label><input type="checkbox"><svg><use href="#iso"/></svg>Символы</label></div></li>
</ul></li></ul></li>
<li><div class="row"><label><input type="radio" name="kind"><svg><use href="#iso"/></svg>Из</label></div></li>
</ul></li>
<li><div class="row"><label><input type="checkbox" checked><svg><use href="#iso"/></svg>Результирующие балки</label></div></li>
<li><div class="row"><label><input type="checkbox"><svg><use href="#iso"/></svg>Прозрачно</label></div></li>
</ul></li>
<li><div class="row"><button aria-label="Свернуть">−</button><label><input type="checkbox" checked><svg><use href="#mesh"/></svg>Сетка КЭ</label></div><ul>
<li><div class="row"><button aria-label="Развернуть">+</button><label><input type="checkbox"><svg><use href="#mesh"/></svg>На стержнях</label></div></li>
<li><div class="row"><label><input type="checkbox"><svg><use href="#mesh"/></svg>На результатах стержней</label></div></li>
<li><div class="row"><button aria-label="Развернуть">+</button><label><input type="checkbox" checked><svg><use href="#mesh"/></svg>На поверхностях</label></div></li>
<li><div class="row"><label><input type="checkbox"><svg><use href="#mesh"/></svg>На результатах поверхности</label></div></li>
<li><div class="row"><button aria-label="Развернуть">+</button><label><input type="checkbox"><svg><use href="#mesh"/></svg>В телах</label></div></li>
<li><div class="row"><button aria-label="Развернуть">+</button><label><input type="checkbox"><svg><use href="#mesh"/></svg>Качество сетки</label></div></li>
</ul></li>
<li><div class="row"><button aria-label="Свернуть">−</button><label><input type="checkbox" class="mixed"><svg><use href="#knife"/></svg>Разрезы</label></div><ul>
<li><div class="row"><label><input type="checkbox" checked><svg><use href="#knife"/></svg>Обозначения</label></div></li>
<li><div class="row"><label><input type="checkbox" checked><svg><use href="#knife"/></svg>Изобразить на переднем плане</label></div></li>
<li><div class="row"><label><input type="checkbox"><svg><use href="#knife"/></svg>Заполнить эпюры результатов</label></div></li>
<li><div class="row"><label><input type="checkbox" checked><svg><use href="#knife"/></svg>Штриховка</label></div></li>
<li><div class="row"><label><input type="checkbox"><svg><use href="#knife"/></svg>Все величины</label></div></li>
</ul></li>
<li><div class="row"><button aria-label="Развернуть">+</button><label><input type="checkbox" checked><svg><use href="#pyr"/></svg>Средние области</label></div></li>
<li><div class="row"><button aria-label="Свернуть">−</button><label><input type="checkbox" class="mixed"><svg><use href="#sign"/></svg>Вспомогательные объекты</label></div><ul>
<li><div class="row"><button aria-label="Развернуть">+</button><label><input type="checkbox"><svg><use href="#sign"/></svg>Размеры</label></div></li>
<li><div class="row"><button aria-label="Развернуть">+</button><label><input type="checkbox"><svg><use href="#sign"/></svg>Комментарии</label></div></li>
<li><div class="row"><button aria-label="Развернуть">+</button><label><input type="checkbox" checked><svg><use href="#sign"/></svg>Направляющие</label></div></li>
<li><div class="row"><label><input type="checkbox" aria-label="Слои линий"><svg><use href="#sign"/></svg></label></div></li>
<li></li>
</ul></li>
<li></li>
</ul>
<div class="scroll"><button aria-label="Вверх"><svg viewBox="0 0 16 16"><path d="M4 10l4-4 4 4" stroke="#444" stroke-width="2" fill="none"/></svg></button><span></span><span class="thumb"></span></div>
</div>
<svg class="marks" viewBox="0 0 290 872" preserveAspectRatio="xMinYMin slice" aria-hidden="true"><g fill="none" stroke="#ed1c24" stroke-width="3"><path d="M5.500 254.500h150v22H5.500zM36.500 381.500h129v21h-129zM94.500 417.500h177v20h-177z"/></g></svg>
</aside>

<section class="work">
<svg class="view" viewBox="291 101 1047 776" preserveAspectRatio="xMinYMin slice" role="img" aria-label="Модель">
<g>
<path d="M677.500 508L1104.500 674V838L677.500 673z" fill="#dedede"/><path d="M1104.500 674L1358 394V559L1104.500 838z" fill="#dedede"/>
<path d="M931 229L677.500 508V673L931 393z" fill="#bebebe"/>
<path d="M677.500 508L1104.500 674V838L677.500 673z" fill="url(#pFront)" opacity=".5"/><path d="M1104.500 674L1358 394V559L1104.500 838z" fill="url(#pSide)" opacity=".5"/>
<path d="M888 118L1528 366 1148 785 508 537z" fill="#a8a8a8"/><path d="M888 118L1528 366 1148 785 508 537z" fill="url(#pSlab)" opacity=".45"/>
</g>
<g clip-path="url(#cSlab)">
<path d="M931 229L1358 394V559L931 393z" fill="#000" fill-opacity=".08"/><path d="M931 229L677.500 508V673L931 393z" fill="#000" fill-opacity=".1"/>
<path d="M677.500 508L1104.500 674V838L677.500 673z" fill="#000" fill-opacity=".06"/><path d="M1104.500 674L1358 394V559L1104.500 838z" fill="#000" fill-opacity=".06"/>
<g opacity=".1"><path d="M931 229L1358 394V559L931 393zM677.500 508L1104.500 674V838L677.500 673z" fill="url(#pFront)"/><path d="M931 229L677.500 508V673L931 393zM1104.500 674L1358 394V559L1104.500 838z" fill="url(#pSide)"/></g>
</g>
<g fill="none">
<path d="M931 393L1358 559M931 393L677.500 673" stroke="#6cb46c"/>
<path d="M677.500 673L720 626" stroke="#40e840"/>
<path d="M677.500 673L1104.500 838 1358 559" stroke="#20f020"/>
<path d="M931 229V393M1145 311V477M804.500 368V533M891 591V755M1231.500 534V699M677.500 508V673M1104.500 674V768" stroke="#6a6a6a"/>
<path d="M1104.500 768V838" stroke="#000"/>
<path d="M888 118L1528 366 1148 785 508 537zM1208 242L828 661M698 327.500L1338 575.500" stroke="#000"/>
<path d="M931 229L677.500 508 1104.500 674 1358 394z" stroke="#222"/>
<path d="M931 233L1358 398M682 514L1104 678M926 238L684 504M1343 413L1108 672" stroke="#4c7c7c" stroke-opacity=".6" stroke-width="9" stroke-dasharray="1.500 27"/>
<path d="M930 222.500L668 509 1106 680.500 1368 393zM934 236L688 507 1100 667 1346 397z" stroke="#000" stroke-width="1.800"/>
<path d="M926 226l8 10M668 509l20-2" stroke="#000" stroke-width="1"/>
</g>
<g fill="#7a0c0c"><path d="M886 116h4v4h-4zM1206 240h4v4h-4zM506 535h4v4h-4zM696 325.500h4v4h-4zM826 659h4v4h-4zM1146 783h4v4h-4zM1016 449.500h4v4h-4zM1143 309h4v4h-4zM889 589h4v4h-4zM1229.500 532h4v4h-4zM802.500 366h4v4h-4zM675.500 671h4v4h-4zM1102.500 836h4v4h-4zM1336 574h4v4h-4zM1229.500 697h4v4h-4z"/><path d="M889 753h4v4h-4z" fill="#f01010"/></g>
<g color="#6c9f6c"><use href="#support" x="977" y="414" width="16" height="14"/><use href="#support" x="1083" y="455" width="16" height="14"/><use href="#support" x="1190" y="496" width="16" height="14"/><use href="#support" x="1296" y="537" width="16" height="14"/><use href="#support" x="892" y="428" width="16" height="14"/><use href="#support" x="829" y="497" width="16" height="14"/><use href="#support" x="765" y="567" width="16" height="14"/></g>
<g color="#54c854"><use href="#support" x="702" y="637" width="16" height="14"/></g>
<g color="#22dc22"><use href="#support" x="723" y="692" width="16" height="14"/><use href="#support" x="830" y="734" width="16" height="14"/><use href="#support" x="936" y="775" width="16" height="14"/><use href="#support" x="1043" y="817" width="16" height="14"/><use href="#support" x="1128" y="803" width="16" height="14"/><use href="#support" x="1192" y="733" width="16" height="14"/><use href="#support" x="1255" y="663" width="16" height="14"/><use href="#support" x="1319" y="593" width="16" height="14"/></g>
<use href="#sphere" x="931.500" y="229"/><use href="#sphere" x="678" y="508"/><use href="#sphere" x="1104.500" y="674"/><use href="#sphere" x="1358" y="395"/>
<g fill="none" stroke-width="2"><path d="M902 223C908 212 916 207 926 207.500S944 210 955 215.500" stroke="#1010f0"/><path d="M656 493C646 502 643 509 646 515S655 524 671 528" stroke="#0808b0"/><path d="M1081 688C1104 698 1122 701 1135 679" stroke="#f81010"/></g>
<g stroke-width="2"><path d="M1018 616l25 9" stroke="#f81010"/><path d="M1018 616l-15 17" stroke="#10e010"/><path d="M1018 616v23" stroke="#1010f0"/><path d="M346 743l28 11" stroke="#f81010"/><path d="M346 743l-14 22" stroke="#10e010"/><path d="M346 743v18" stroke="#10f0f8"/></g>
<path d="M1044 622l9 7-11-1zM374 751l9 7-12-2z" fill="#a80808" stroke="#a80808"/><path d="M999 631l6 4-8 5zM329 763l5 4-7 6z" fill="#08a808" stroke="#08a808"/><path d="M1016 638h4l-2 9z" fill="#0808a0" stroke="#0808a0"/><path d="M344 759h4l-2 9z" fill="#10a0a8" stroke="#10a0a8"/>
<g class="axis"><text x="1058" y="637" fill="#f81010">X</text><text x="989" y="648" fill="#10e010">Y</text><text x="1015" y="658" fill="#1010f0">Z</text><text x="388" y="765" fill="#f81010">X</text><text x="320" y="783" fill="#10e010">Y</text><text x="343" y="777" fill="#10e8f0">Z</text></g>
<g fill="#f2efe6" fill-opacity=".88" stroke="#111"><path d="M901.500 205.500h33v16h-30l-3 3zM671.500 509.500h33v16h-29l-4 3zM1099.500 659.500h33v16l3 4-8-4h-28zM1329.500 355.500h33v16h-33z"/></g>
<g class="val"><text x="904" y="218">0.47</text><text x="675" y="522">0.44</text><text x="1103" y="672">0.56</text><text x="1331" y="368">0</text></g>
<path d="M318 525.500h292" stroke="#ed1c24" stroke-width="3"/><path d="M298 525.500l21-8v16zM629 525.500l-21-8v16z" fill="#ed1c24"/>
<g class="cap"><text x="295" y="117">Арматура от продавливания a-s,w [см^2]</text><text x="295" y="131">RF-PUNCH Pro PC1</text><text x="295" y="868" clip-path="url(#cMax)">Макс.a-s,w: 0.00, Мин.a-s,w: 0.00 см</text></g>
<path d="M292 876.500h187" stroke="#ddd"/>
</svg>
<div class="dock">
<div class="dockhead"><h2>1.1 Узлы</h2></div>
<div class="group">
<button class="on" aria-label="Графика"><svg><use href="#t1"/></svg></button><button aria-label="Нагрузки"><svg><use href="#t2"/></svg></button><button aria-label="Данные нагрузок"><svg><use href="#t3"/></svg></button><button aria-label="Результаты таблицы"><svg><use href="#t4"/></svg></button><button aria-label="Протокол таблицы"><svg><use href="#t5"/></svg></button><span class="sep"></span>
<button aria-label="Предыдущая таблица"><svg><use href="#tl"/></svg></button><button aria-label="Следующая таблица"><svg><use href="#tr"/></svg></button><span class="sep"></span>
<button class="on" aria-label="Выбор из графики"><svg><use href="#c1"/></svg></button><button class="on" aria-label="Выбор из таблицы"><svg><use href="#c2"/></svg></button><button aria-label="Обновить"><svg><use href="#c3"/></svg></button><span class="sep"></span>
<button aria-label="Сложить"><svg><use href="#g1"/></svg></button><button aria-label="Умножить"><svg><use href="#g2"/></svg></button><button aria-label="Разделить"><svg><use href="#g3"/></svg></button><span class="sep"></span>
<button aria-label="Очистить"><svg><use href="#g4"/></svg></button><span class="sep"></span>
<button aria-label="Удалить строку"><svg><use href="#r1"/></svg></button><button aria-label="Вставить строку"><svg><use href="#r2"/></svg></button><button aria-label="Переместить строку"><svg><use href="#r3"/></svg></button><span class="sep"></span>
<button aria-label="Заголовки"><svg><use href="#ty"/></svg></button><button aria-label="Строки"><svg><use href="#tv"/></svg></button><span class="sep"></span>
<button aria-label="Заметка"><svg><use href="#tp"/></svg></button><span class="sep"></span>
<button aria-label="Свойства"><svg><use href="#prop"/></svg></button><button aria-label="Просмотр строк"><svg><use href="#glass"/></svg></button><button aria-label="Excel"><svg><use href="#xl"/></svg></button><button aria-label="Калькулятор"><svg><use href="#calc"/></svg></button><span class="sep"></span>
<button class="glyph small" aria-label="Параметр"><svg class="top" viewBox="0 0 16 6"><use href="#win" x="6"/></svg>ab=</button><button class="glyph" aria-label="Формула">fx</button><button class="glyph red" aria-label="Удалить формулу"><svg class="x" viewBox="0 0 8 8"><path d="M1 1l6 6M7 1L1 7" stroke="#d86a6a" stroke-width="2"/></svg>fx</button><span class="sep"></span>
<button aria-label="Разблокировать"><svg><use href="#unl"/></svg></button>
</div>
<div class="sheet">
<table>
<colgroup><col class="c0"><col class="c1"><col class="c2"><col class="c3"><col class="c4"><col class="c4"><col class="c4"><col class="c5"></colgroup>
<tr class="abc"><th rowspan="3" class="no">Узел<br>№</th><th class="sel">A</th><th>B</th><th>C</th><th>D</th><th>E</th><th>F</th><th></th></tr>
<tr><td></td><td>Узел-</td><td>Система</td><td colspan="3">Координаты узла</td><td></td></tr>
<tr><td>Тип узла</td><td>ориентир</td><td>координат</td><td>X [м]</td><td class="in">Y [м]</td><td class="in">Z [м]</td><td>Комментарий</td></tr>
</table>
</div>
</div>
</section>
</main>
</body>
</html>
```
FILE: styles.css
```css
* { box-sizing: border-box; }
body {
  margin: 0;
  height: 100vh;
  overflow: hidden;
  display: flex;
  flex-direction: column;
  background: #cfd3dd;
  color: #000;
  font: 11px/18px "Noto Sans", "Open Sans", sans-serif;
}
button { border: 0; padding: 0; margin: 0; background: none; font: inherit; color: inherit; }
h1, h2 { margin: 0; font-size: 11px; font-weight: 400; }
.defs { width: 0; height: 0; flex: none; display: block; }
.title { flex: none; height: 23px; display: flex; align-items: center; gap: 4px; padding-left: 2px; background: #fff; }
.logo { width: 17px; height: 17px; }
.menu { flex: none; height: 24px; display: flex; align-items: center; color: #4b4b57; }
.menu a { color: inherit; text-decoration: none; padding: 0 7px; white-space: nowrap; }
.brand { width: 16px; height: 13px; margin-right: 3px; }
.grip { flex: none; align-self: center; width: 10px; height: 15px; background: repeating-linear-gradient(#9aa0ae 0 2px, transparent 2px 4px) 4px 0 / 2px 100% no-repeat; }
.bars { flex: none; height: 26px; display: flex; gap: 2px; }
.group { flex: none; display: flex; align-items: center; height: 26px; background: linear-gradient(#eaedf6, #cdd3e0); border-bottom: 1px solid #a3a7b3; border-radius: 0 4px 4px 0; }
.group button { flex: none; width: 22px; height: 22px; display: flex; align-items: center; justify-content: center; }
.group svg { width: 16px; height: 16px; display: block; }
.group .on { border: 1px solid #a8946c; border-radius: 2px; background: linear-gradient(#f8b868, #fde49c); }
.group .dd { width: 13px; }
.dd::before { content: ""; border: 3px solid transparent; border-top: 4px solid #6b6f7b; border-bottom: 0; }
.sep { flex: none; width: 8px; height: 15px; background: linear-gradient(#a4a8b4, #a4a8b4) 3px 0 / 1px 100% no-repeat, linear-gradient(#fff, #fff) 4px 0 / 1px 100% no-repeat; }
.dim { opacity: .5; }
.case {
  appearance: none; width: 217px; height: 20px; margin: 0 1px 0 2px; padding: 0 18px 0 2px; border: 1px solid #fff; border-radius: 0; color: #000; font: inherit; line-height: 16px;
  background: linear-gradient(45deg, transparent 50%, #777 50%) 205px 7px / 3px 3px no-repeat, linear-gradient(315deg, transparent 50%, #777 50%) 208px 7px / 3px 3px no-repeat, linear-gradient(#dfe2ea, #dfe2ea) right / 14px 100% no-repeat, #fff;
}

main { flex: 1; min-height: 0; display: grid; grid-template-columns: 290px 1fr; border-top: 1px solid #9a9eaa; }
aside { position: relative; display: flex; flex-direction: column; min-height: 0; padding-right: 6px; }
.dockhead { flex: none; display: flex; align-items: center; height: 20px; padding: 0 2px 0 4px; background: #b9bfca; color: #444953; }
.dockhead h2 { flex: 1; }
.dockhead button { width: 16px; height: 16px; display: block; }
.dockhead svg { width: 14px; height: 14px; display: block; margin: 1px; }
.treebox { flex: 1; min-height: 0; display: grid; grid-template-columns: 1fr 15px; padding: 0 3px; background: #eceef5; border-top: 1px solid #e6e9f2; }
.tree { min-width: 0; overflow: hidden; background: #fcfbf4; padding: 1px 0 0; }
.tree, .tree ul { margin: 0; list-style: none; }
.tree ul { padding: 0 0 0 19px; }
.tree li { background: repeating-linear-gradient(#8c8c8c 0 1px, transparent 1px 2px) 11px 0 / 1px 100% no-repeat; }
.tree li:last-child { background-size: 1px 11px; }
.row { display: flex; align-items: center; height: 18px; padding-left: 24px; white-space: nowrap; background: repeating-linear-gradient(90deg, #8c8c8c 0 1px, transparent 1px 2px) 11px 10px / 13px 1px no-repeat; }
.row button { flex: none; width: 9px; height: 9px; margin: 2px 8px 0 -17px; border: 1px solid #919191; border-radius: 1px; background: #fff; color: #1c3c90; font: 10px/7px "DejaVu Sans", sans-serif; }
.row label { display: flex; align-items: center; }
.row svg { width: 16px; height: 16px; margin: 0 5px 0 2px; flex: none; }
.bold { font-weight: 700; }
.row input { appearance: none; flex: none; display: flex; align-items: center; justify-content: center; width: 13px; height: 13px; margin: 0; border: 1px solid #3f3f46; background: linear-gradient(135deg, #d4d6da, #fff); }
.row input:checked::before { content: ""; width: 8px; height: 4px; margin-top: -2px; border: solid #000; border-width: 0 0 2px 2px; transform: rotate(-48deg); }
.row input[type=radio] { border-radius: 50%; }
.row input[type=radio]:checked::before { width: 5px; height: 5px; margin: 0; border: 0; border-radius: 50%; background: #111; transform: none; }
.row .mixed::before { content: ""; width: 7px; height: 7px; background: #9a9a9a; }
.scroll { display: grid; grid-template-rows: 19px 258fr 399fr 175fr; background: #f0f0f0; }
.scroll svg { width: 15px; height: 16px; display: block; }
.thumb { background: #cdcdcd; }
.marks { position: absolute; left: 0; top: 0; width: 290px; height: 872px; pointer-events: none; }

.work { display: flex; flex-direction: column; min-width: 0; min-height: 0; }
.view { flex: 1; min-height: 0; width: 100%; display: block; background: #fff; border: solid #6c6c74; border-width: 1px 0 0 1px; }
.cap { font: 11px "Liberation Sans", Arial, sans-serif; fill: #000; }
.val { font: 11px "Liberation Mono", monospace; fill: #1010e0; }
.axis { font: 10px "Liberation Sans", Arial, sans-serif; }
.dock { flex: none; border-top: 5px solid #cfd5e2; background: #cfd3dd; }
.dock .group { padding-left: 8px; border-radius: 0; border-bottom-color: #55585f; }
.group .glyph { font: italic 16px/16px "Liberation Serif", serif; color: #666; }
.group .small { flex-direction: column; font-size: 11px; line-height: 10px; font-weight: 700; color: #223; }
.group .top { height: 6px; }
.group .x { width: 8px; height: 8px; margin: 0 -3px 6px 0; }
.group .red { font-size: 14px; color: #999; }
.sheet { height: 44px; margin-top: 1px; padding: 2px 0 0 2px; overflow: hidden; background: #fff; font: 11px/14px "Liberation Sans", Arial, sans-serif; }
table { table-layout: fixed; width: 1605px; border-collapse: collapse; background: #efefef; }
td, th { padding: 0; font-weight: 400; text-align: center; vertical-align: middle; border: solid #8a8a8a; border-width: 0 1px; height: 15px; line-height: 13px; }
.abc th { height: 14px; background: #e2e2e2; border: 1px solid #666; line-height: 12px; }
.abc .no { vertical-align: middle; background: #e2e2e2; line-height: 13px; }
.abc .sel { background: #3399ff; color: #fff; }
.c0 { width: 46px; } .c1 { width: 84px; } .c2 { width: 71px; } .c3 { width: 90px; } .c4 { width: 78px; } .c5 { width: 1080px; }
```
